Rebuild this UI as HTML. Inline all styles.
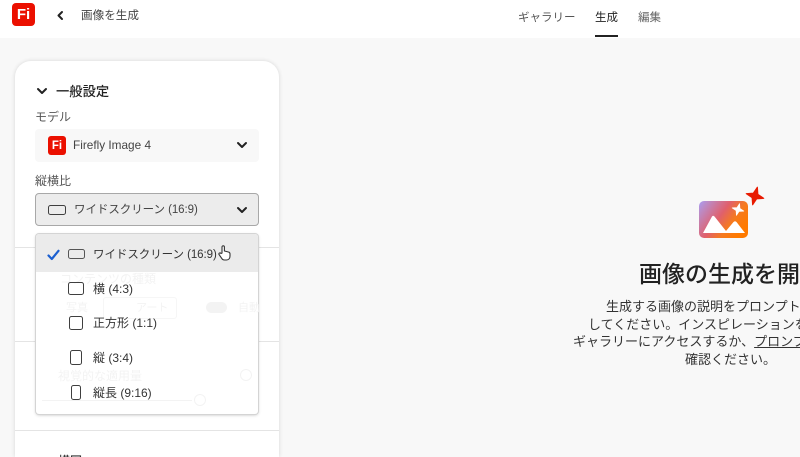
<!DOCTYPE html>
<html lang="ja"><head><meta charset="utf-8"><style>
html,body{margin:0;padding:0;width:800px;height:457px;overflow:hidden}
body{background:#f8f8f8;font-family:"Liberation Sans","Noto Sans CJK JP",sans-serif;color:#2c2c2c}
#w{position:relative;width:800px;height:457px;overflow:hidden;background:#f8f8f8}
.a{position:absolute;white-space:nowrap}
svg{position:absolute;display:block}
.ck{fill:none;stroke:#222;stroke-width:2;stroke-linecap:round;stroke-linejoin:round}
.shape{position:absolute;border:1.8px solid #3f3f3f;border-radius:2.5px;box-sizing:border-box}
.fi{position:absolute;background:#eb1000;color:#fff;font-weight:700;display:flex;align-items:center;justify-content:center}
.t{font-size:12px;line-height:16px;color:#333}
.g{color:#f3f3f3}
</style></head><body><div id="w">
<div class="a" style="left:0;top:0;width:800px;height:38px;background:#fff"></div>
<div class="fi" style="left:12px;top:3px;width:23px;height:23px;border-radius:4px;font-size:15px">Fi</div>
<svg style="left:56px;top:10px" width="10" height="12"><path class="ck" d="M6 2 L2.500 5.500 L6 9"/></svg>
<div class="a" style="left:81px;top:8px;font-size:11.600px;line-height:16px;color:#444">画像を生成</div>
<div class="a" style="left:518px;top:10px;font-size:11.500px;line-height:17px;color:#555">ギャラリー</div>
<div class="a" style="left:595px;top:10px;font-size:11.500px;line-height:17px;color:#222">生成</div>
<div class="a" style="left:638px;top:10px;font-size:11.500px;line-height:17px;color:#666">編集</div>
<div class="a" style="left:595px;top:35px;width:23px;height:2px;background:#222"></div>

<div class="a" style="left:15px;top:61px;width:264px;height:396px;background:#fff;border-radius:16px 16px 0 0;box-shadow:0 0 4px rgba(0,0,0,.14)"></div>
<svg style="left:36px;top:86px" width="12" height="10"><path class="ck" d="M2 3 L6 7 L10 3"/></svg>
<div class="a" style="left:56px;top:82px;font-size:13.300px;line-height:19px;font-weight:500;color:#222">一般設定</div>
<div class="a" style="left:35px;top:109px;font-size:12px;line-height:17px;color:#555">モデル</div>
<div class="a" style="left:35px;top:129px;width:224px;height:33px;background:#f8f8f8;border-radius:4px"></div>
<div class="fi" style="left:48px;top:136px;width:18px;height:19px;border-radius:3px;font-size:11.500px">Fi</div>
<div class="a" style="left:73px;top:137px;font-size:11.800px;line-height:17px;color:#444">Firefly Image 4</div>
<svg style="left:236px;top:140px" width="12" height="10"><path class="ck" d="M2 3 L6 7 L10 3"/></svg>
<div class="a" style="left:35px;top:173px;font-size:12px;line-height:17px;color:#555">縦横比</div>
<div class="a" style="left:35px;top:193px;width:224px;height:33px;box-sizing:border-box;background:#ececec;border:1px solid #a8a8a8;border-radius:4px"></div>
<div class="shape" style="left:48px;top:205px;width:18px;height:10px"></div>
<div class="a t" style="left:74px;top:202px;color:#444;font-size:11.500px;letter-spacing:-.06px">ワイドスクリーン (16:9)</div>
<svg style="left:236px;top:205px" width="12" height="10"><path class="ck" d="M2 3 L6 7 L10 3"/></svg>

<div class="a" style="left:15px;top:247px;width:264px;height:1px;background:#e4e4e4"></div>
<div class="a" style="left:15px;top:341px;width:264px;height:1px;background:#e4e4e4"></div>
<div class="a" style="left:15px;top:430px;width:264px;height:1px;background:#e4e4e4"></div>
<div class="a" style="left:58px;top:453px;height:4px;overflow:hidden;font-size:12px;line-height:17px;font-weight:500;color:#333">構図</div>

<div class="a" style="left:36px;top:234px;width:222px;height:180px;background:#fff;border-radius:3px;box-shadow:0 0 0 1px #d4d4d4,0 1px 3px rgba(0,0,0,.25)"></div>
<div class="a" style="left:36px;top:234px;width:222px;height:38px;background:#ebebeb;border-radius:3px 3px 0 0"></div>
<div class="a g" style="left:60px;top:271px;font-size:12px;line-height:17px">コンテンツの種類</div>
<div class="a g" style="left:66px;top:300px;font-size:11px;line-height:16px">写真</div>
<div class="a g" style="left:136px;top:300px;font-size:11px;line-height:16px">アート</div>
<div class="a" style="left:103px;top:297px;width:74px;height:22px;box-sizing:border-box;border:1px solid #f6f6f6;border-radius:3px"></div>
<div class="a" style="left:206px;top:302px;width:21px;height:11px;background:#f3f3f3;border-radius:6px"></div>
<div class="a g" style="left:238px;top:300px;font-size:11px;line-height:16px">自動</div>
<div class="a g" style="left:58px;top:368px;font-size:12px;line-height:17px">視覚的な適用量</div>
<div class="a" style="left:240px;top:369px;width:12px;height:12px;box-sizing:border-box;border:1px solid #f3f3f3;border-radius:50%"></div>
<div class="a" style="left:42px;top:400px;width:150px;height:1px;background:#f3f3f3"></div>
<div class="a" style="left:194px;top:394px;width:12px;height:12px;box-sizing:border-box;border:1px solid #f3f3f3;border-radius:50%;background:#fff"></div>
<svg style="left:47px;top:249px" width="13" height="12"><path d="M1.500 6.500 L4.800 10 L11.500 1.800" fill="none" stroke="#1b5fd0" stroke-width="2.200" stroke-linecap="round" stroke-linejoin="round"/></svg>
<div class="shape" style="left:68px;top:249px;width:17px;height:10px;border-width:1.400px;border-color:#555"></div>
<div class="a t" style="left:93px;top:247px;font-size:11.500px;letter-spacing:-.06px">ワイドスクリーン (16:9)</div>
<svg style="left:217px;top:244px" width="15" height="18"><path d="M5 9 V3 a1.200 1.200 0 0 1 2.400 0 V7 l4 1 a2 2 0 0 1 1.600 2 v2 c0 2.500-1.500 4-3.500 4 h-2 c-1.500 0-2.500-1-3-2 L2 10.500 a1.100 1.100 0 0 1 2-1 z" fill="#fff" stroke="#333" stroke-width="1.100"/></svg>
<div class="shape" style="left:68px;top:282px;width:16px;height:13px"></div>
<div class="a t" style="left:93px;top:281px">横 (4:3)</div>
<div class="shape" style="left:69px;top:316px;width:14px;height:14px"></div>
<div class="a t" style="left:93px;top:315px">正方形 (1:1)</div>
<div class="shape" style="left:70px;top:350px;width:12px;height:15px"></div>
<div class="a t" style="left:93px;top:350px">縦 (3:4)</div>
<div class="shape" style="left:71px;top:385px;width:10px;height:15px"></div>
<div class="a t" style="left:93px;top:385px">縦長 (9:16)</div>

<svg style="left:695px;top:185px" width="75" height="60" viewBox="0 0 75 60">
<defs><linearGradient id="g" x1="0" y1="0" x2="1" y2=".55"><stop offset="0" stop-color="#a99cf5"/><stop offset=".14" stop-color="#bb8cc8"/><stop offset=".5" stop-color="#e0606c"/><stop offset=".75" stop-color="#f57a20"/><stop offset="1" stop-color="#ff7a00"/></linearGradient></defs>
<rect x="4" y="16" width="49" height="37" rx="5" fill="url(#g)"/>
<path d="M8 48 L17 31.500 Q18 30 19.500 31.500 L31 46 L38.500 37 Q40 35.500 41.500 37 L50 48 Z" fill="#fff"/>
<path transform="translate(43 24.500) rotate(15)" d="M0 -6 L1.500 -1.500 L6 0 L1.500 1.500 L0 6 L-1.500 1.500 L-6 0 L-1.500 -1.500Z" fill="#fff" stroke="#fff" stroke-width=".8" stroke-linejoin="round"/>
<path transform="translate(60 11) rotate(15)" d="M0 -9 L2.300 -2.300 L9 0 L2.300 2.300 L0 9 L-2.300 2.300 L-9 0 L-2.300 -2.300Z" fill="#e81a00" stroke="#e81a00" stroke-width="1.200" stroke-linejoin="round"/>
</svg>
<div class="a" style="left:639px;top:259px;font-size:23px;line-height:30px;font-weight:500;color:#222">画像の生成を開始</div>
<div class="a" style="left:606px;top:298px;font-size:13px;line-height:17.500px;color:#333">生成する画像の説明をプロンプトに入力</div>
<div class="a" style="left:588px;top:316px;font-size:13px;line-height:17.500px;color:#333">してください。インスピレーションを得るには</div>
<div class="a" style="left:573px;top:333px;font-size:13px;line-height:17.500px;color:#333">ギャラリーにアクセスするか、<span style="text-decoration:underline">プロンプトのガイド</span>を</div>
<div class="a" style="left:685px;top:351px;font-size:13px;line-height:17.500px;color:#333">確認ください。</div>
</div></body></html>
